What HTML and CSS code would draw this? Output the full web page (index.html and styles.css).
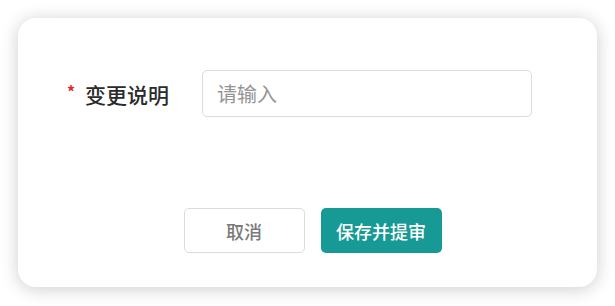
FILE: index.html
```html
<!DOCTYPE html>
<html lang="zh-CN">
<head>
    <meta charset="UTF-8">
    <meta name="viewport" content="width=device-width, initial-scale=1.0">
    <title>变更说明</title>
    <link rel="stylesheet" href="styles.css">
</head>
<body>
    <div class="dialog">
        <!-- Form -->
        <div class="form-row">
            <label class="form-label" for="change-note"><span class="required">*</span>变更说明</label>
            <input type="text" id="change-note" class="form-input" placeholder="请输入" autocomplete="off">
        </div>

        <!-- Footer Buttons -->
        <div class="dialog-footer">
            <button class="btn btn-cancel">取消</button>
            <button class="btn btn-primary">保存并提审</button>
        </div>
    </div>
</body>
</html>
```

FILE: styles.css
```css
body {
    margin: 0;
    padding: 18px;
    background: #ffffff;
    font-family: "Noto Sans CJK SC", "Noto Sans", sans-serif;
}

.dialog {
    width: 579px;
    height: 269px;
    box-sizing: border-box;
    background: #ffffff;
    border-radius: 18px;
    box-shadow: 0 2px 18px rgba(0, 0, 0, 0.2);
    padding: 52px 0 0 0;
    display: flex;
    flex-direction: column;
}

/* Form Row */
.form-row {
    display: flex;
    align-items: center;
    padding-left: 49px;
}

.form-label {
    display: flex;
    align-items: center;
    width: 135px;
    font-size: 21px;
    font-weight: 500;
    color: #2b2b2b;
}

.required {
    color: #e8262b;
    font-size: 16px;
    font-weight: 700;
    width: 18px;
    margin-top: -5px;
}

.form-input {
    width: 330px;
    height: 47px;
    box-sizing: border-box;
    border: 1.5px solid #dcdcdc;
    border-radius: 5px;
    padding: 0 14px;
    font-family: inherit;
    font-size: 20px;
    color: #333333;
    outline: none;
}

.form-input::placeholder {
    color: #949494;
}

/* Footer */
.dialog-footer {
    display: flex;
    justify-content: center;
    gap: 16px;
    margin-top: 91px;
    padding-left: 10px;
}

.btn {
    width: 121px;
    height: 45px;
    border-radius: 5px;
    font-family: inherit;
    font-size: 18px;
    font-weight: 500;
    cursor: pointer;
}

.btn-cancel {
    background: #ffffff;
    border: 1.5px solid #dcdcdc;
    color: #7a7a7a;
}

.btn-primary {
    background: #179995;
    border: none;
    color: #ffffff;
}
```
